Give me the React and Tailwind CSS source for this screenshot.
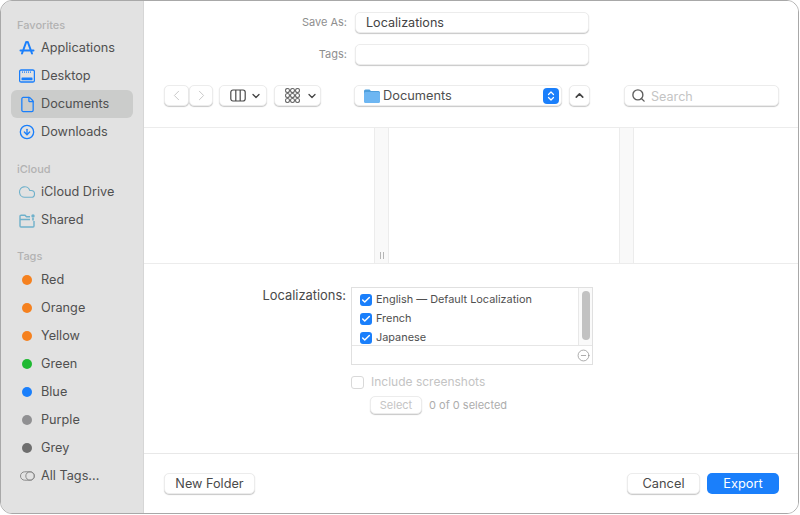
import { Check, ChevronDown, ChevronLeft, ChevronRight, ChevronUp, ChevronsUpDown, Cloud, CircleArrowDown, CircleMinus, File, Search } from 'lucide-react';

const AppsIcon = () => (
  <svg width="16" height="16" viewBox="0 0 16 16" fill="none" stroke="#1a7ffb" strokeWidth="2" strokeLinecap="round">
    <path d="M8.8 2 L13 13.5 M7.2 2 L3 13.5 M1.5 10.6 H14.5" />
  </svg>
);

const DesktopIcon = () => (
  <svg width="16" height="14" viewBox="0 0 16 14" fill="none" stroke="#1a7ffb" strokeWidth="1.3">
    <rect x="0.6" y="1" width="14.8" height="12" rx="1.5" />
    <path d="M3 3.2 H13" strokeDasharray="1 1" />
    <rect x="2.5" y="8.6" width="11" height="2.6" fill="#1a7ffb" stroke="none" rx="0.5" />
  </svg>
);

const SharedIcon = () => (
  <svg width="17" height="15" viewBox="0 0 17 15" fill="none" stroke="#6fb1cb" strokeWidth="1.4">
    <path d="M1 3.5 A1.2 1.2 0 0 1 2.2 2.2 H6 L7.5 3.8 H11 M1 3.5 V13 A1 1 0 0 0 2 14 H14 A1 1 0 0 0 15 13 V8" />
    <path d="M1 6.5 H11" />
    <circle cx="14" cy="3" r="1.7" fill="#6fb1cb" stroke="none" />
    <path d="M13.2 5 H14.8 V7.6 H13.2 Z" fill="#6fb1cb" stroke="none" />
  </svg>
);

const AllTagsIcon = () => (
  <svg width="15" height="10" viewBox="0 0 15 10" fill="none" stroke="#8b8b8b" strokeWidth="1">
    <rect x="0.5" y="0.8" width="14" height="8.4" rx="4.2" />
    <circle cx="10" cy="5" r="4.2" />
  </svg>
);

const ColumnsIcon = () => (
  <svg width="16" height="13" viewBox="0 0 16 13" fill="none" stroke="#4a4a4a" strokeWidth="1.2">
    <rect x="0.8" y="1" width="14.4" height="11" rx="2.2" />
    <path d="M5.8 1 V12 M10.2 1 V12" />
  </svg>
);

const GroupIcon = () => (
  <svg width="15" height="15" viewBox="0 0 15 15" fill="none" stroke="#6a6a6a" strokeWidth="1.1">
    {[0, 1, 2].map((row) =>
      [0, 1, 2].map((col) => (
        <circle key={`${row}-${col}`} cx={2.5 + col * 5} cy={2.5 + row * 5} r="2" />
      ))
    )}
  </svg>
);

const FolderIcon = () => (
  <svg width="16" height="14" viewBox="0 0 16 14">
    <path d="M0 2 A1.5 1.5 0 0 1 1.5 0.5 H5.5 L7 2 H14.5 A1.5 1.5 0 0 1 16 3.5 V5 H0 Z" fill="#4f9fdc" />
    <rect x="0" y="3" width="16" height="11" rx="1.5" fill="#6db6f2" />
  </svg>
);

const favorites = [
  { label: 'Applications', icon: <AppsIcon /> },
  { label: 'Desktop', icon: <DesktopIcon /> },
  { label: 'Documents', icon: <File size={17} color="#1a7ffb" strokeWidth={1.8} />, active: true },
  { label: 'Downloads', icon: <CircleArrowDown size={16} color="#1a7ffb" strokeWidth={2} /> },
];

const icloud = [
  { label: 'iCloud Drive', icon: <Cloud size={18} color="#6fb1cb" strokeWidth={1.5} /> },
  { label: 'Shared', icon: <SharedIcon /> },
];

const tags = [
  { label: 'Red', color: 'bg-[#f5811f]' },
  { label: 'Orange', color: 'bg-[#f5811f]' },
  { label: 'Yellow', color: 'bg-[#f5811f]' },
  { label: 'Green', color: 'bg-[#1fb932]' },
  { label: 'Blue', color: 'bg-[#1a7ffb]' },
  { label: 'Purple', color: 'bg-[#909092]' },
  { label: 'Grey', color: 'bg-[#6e6e6e]' },
];

const SideRow = ({ icon, label, active }) => (
  <div className={`flex items-center h-7 mx-[10px] pl-[6px] rounded-md ${active ? 'bg-[#cbcccb]' : ''}`}>
    <div className="w-[20px] flex justify-center shrink-0">{icon}</div>
    <span className="ml-[4px] text-[12.7px] text-[#505050]">{label}</span>
  </div>
);

const SideHeading = ({ children, className = '' }) => (
  <div className={`h-4 pl-[16px] text-[11px] leading-4 font-medium text-[#b2b2b2] ${className}`}>{children}</div>
);

const Sidebar = () => (
  <aside className="w-[143px] shrink-0 bg-[#e2e2e2] border-r border-[#d6d6d6] pt-4">
    <SideHeading>Favorites</SideHeading>
    <div className="mt-px">
      {favorites.map((item) => <SideRow key={item.label} {...item} />)}
    </div>
    <SideHeading className="mt-[15px]">iCloud</SideHeading>
    <div className="mt-px">
      {icloud.map((item) => <SideRow key={item.label} {...item} />)}
    </div>
    <SideHeading className="mt-[14px] mb-[2px]">Tags</SideHeading>
    {tags.map((tag) => (
      <SideRow key={tag.label} label={tag.label} icon={<span className={`block w-[10px] h-[10px] rounded-full ${tag.color}`} />} />
    ))}
    <SideRow label="All Tags..." icon={<AllTagsIcon />} />
  </aside>
);

const raised = 'bg-white rounded-[5px] border border-[#ececec] shadow-[0_1px_1px_rgba(0,0,0,0.22)]';

const FormRow = ({ label, value, className = '' }) => (
  <div className={`flex items-center ${className}`}>
    <span className="w-[203px] text-right text-[11px] text-[#8e8e8e]">{label}</span>
    <div className={`${raised} ml-[8px] w-[234px] h-[21px] pl-[10px] pt-px flex items-center text-[12.6px] text-[#444444]`}>{value}</div>
  </div>
);

const Toolbar = () => (
  <div className="flex items-center h-[21px] mt-[20px] ml-[20px]">
    <div className={`${raised} w-[25px] h-[21px] flex items-center justify-center`}>
      <ChevronLeft size={17} color="#c4c4c4" strokeWidth={1.3} />
    </div>
    <div className={`${raised} w-[24px] h-[21px] flex items-center justify-center`}>
      <ChevronRight size={17} color="#c4c4c4" strokeWidth={1.3} />
    </div>
    <div className={`${raised} ml-[6px] w-[48px] h-[21px] flex items-center pl-[10px] gap-[4px]`}>
      <ColumnsIcon />
      <ChevronDown size={12} color="#444444" strokeWidth={2.6} />
    </div>
    <div className={`${raised} ml-[7px] w-[47px] h-[21px] flex items-center pl-[10px] gap-[6px]`}>
      <GroupIcon />
      <ChevronDown size={12} color="#444444" strokeWidth={2.6} />
    </div>
    <div className={`${raised} ml-[33px] w-[208px] h-[21px] flex items-center pl-[9px] pr-[2px]`}>
      <FolderIcon />
      <span className="ml-[3px] text-[12.8px] text-[#4f4f4f]">Documents</span>
      <div className="ml-auto w-[16px] h-[16px] rounded-[4px] bg-[#1a7ffb] flex items-center justify-center">
        <ChevronsUpDown size={12} color="#ffffff" strokeWidth={2.4} />
      </div>
    </div>
    <div className={`${raised} ml-[7px] w-[21px] h-[21px] flex items-center justify-center`}>
      <ChevronUp size={13} color="#444444" strokeWidth={3} />
    </div>
    <div className={`${raised} ml-[34px] w-[155px] h-[21px] flex items-center pl-[6px]`}>
      <Search size={15} color="#5f5f5f" strokeWidth={2.2} />
      <span className="ml-[5px] mt-[3px] text-[12.6px] text-[#c4c4c4]">Search</span>
    </div>
  </div>
);

const ColumnBrowser = () => (
  <div className="flex h-[137px] border-y border-[#ececec]">
    <div className="w-[230px]" />
    <div className="w-[15px] bg-[#f9f9f9] border-x border-[#ececec] flex items-end justify-center pb-[4px] gap-[2px]">
      <span className="block w-px h-[7px] bg-[#b5b5b5]" />
      <span className="block w-px h-[7px] bg-[#b5b5b5]" />
    </div>
    <div className="w-[230px]" />
    <div className="w-[15px] bg-[#f9f9f9] border-x border-[#ececec]" />
    <div className="flex-1" />
  </div>
);

const BlueCheck = () => (
  <span className="w-[12px] h-[12px] rounded-[3px] bg-[#1a7ffb] flex items-center justify-center">
    <Check size={10} color="#ffffff" strokeWidth={3.5} />
  </span>
);

const LocalizationRow = ({ label }) => (
  <div className="flex items-center h-[19px] gap-[4px]">
    <BlueCheck />
    <span className="text-[10.9px] text-[#505050]">{label}</span>
  </div>
);

const Options = () => (
  <div className="h-[189px] pt-[23px] flex">
    <div className="w-[202px] text-right text-[12.9px] leading-[18px] text-[#4a4a4a]">Localizations:</div>
    <div className="ml-[5px]">
      <div className="w-[242px] h-[78px] border border-[#e0e0e0] flex flex-col">
        <div className="h-[58px] flex border-b border-[#e6e6e6] overflow-hidden">
          <div className="flex-1 pl-[8px] pt-[2px]">
            <LocalizationRow label="English — Default Localization" />
            <LocalizationRow label="French" />
            <LocalizationRow label="Japanese" />
          </div>
          <div className="w-[14px] border-l border-[#e8e8e8] bg-[#fafafa] flex justify-center pt-[3px]">
            <span className="block w-[8px] h-[49px] rounded-full bg-[#c2c2c2]" />
          </div>
        </div>
        <div className="flex-1 flex justify-end items-center pr-[2px]">
          <CircleMinus size={13} color="#8a8a8a" strokeWidth={1.3} />
        </div>
      </div>
      <div className="flex items-center mt-[9px] h-[16px]">
        <span className="w-[13px] h-[13px] rounded-[3px] border border-[#d9d9d9] bg-white" />
        <span className="ml-[7px] text-[12px] text-[#c4c4c4]">Include screenshots</span>
      </div>
      <div className="flex items-center mt-[6px] ml-[19px]">
        <div className={`${raised} w-[52px] h-[18px] flex items-center justify-center text-[11px] text-[#c4c4c4]`}>Select</div>
        <span className="ml-[7px] text-[11px] text-[#adadad]">0 of 0 selected</span>
      </div>
    </div>
  </div>
);

const Footer = () => (
  <div className="flex-1 border-t border-[#e8e8e8] pt-[19px] pl-[20px] pr-[19px] flex items-start">
    <div className={`${raised} w-[91px] h-[21px] flex items-center justify-center text-[12.7px] text-[#4a4a4a]`}>New Folder</div>
    <div className={`${raised} ml-auto w-[73px] h-[21px] flex items-center justify-center text-[12.8px] text-[#4a4a4a]`}>Cancel</div>
    <div className="ml-[7px] w-[72px] h-[21px] rounded-[5px] bg-[#1a7ffb] flex items-center justify-center text-[12.8px] text-white">Export</div>
  </div>
);

export default function App() {
  return (
    <div className="w-[800px] h-[515px] bg-white font-['Inter','Liberation_Sans',sans-serif]">
      <div className="w-[799px] h-[514px] rounded-[12px] border border-[#a8a8a8] overflow-hidden flex">
        <Sidebar />
        <main className="flex-1 flex flex-col bg-white">
          <div className="h-[126px] pt-[11px]">
            <FormRow label="Save As:" value="Localizations" />
            <FormRow label="Tags:" className="mt-[11px]" />
            <Toolbar />
          </div>
          <ColumnBrowser />
          <Options />
          <Footer />
        </main>
      </div>
    </div>
  );
}
